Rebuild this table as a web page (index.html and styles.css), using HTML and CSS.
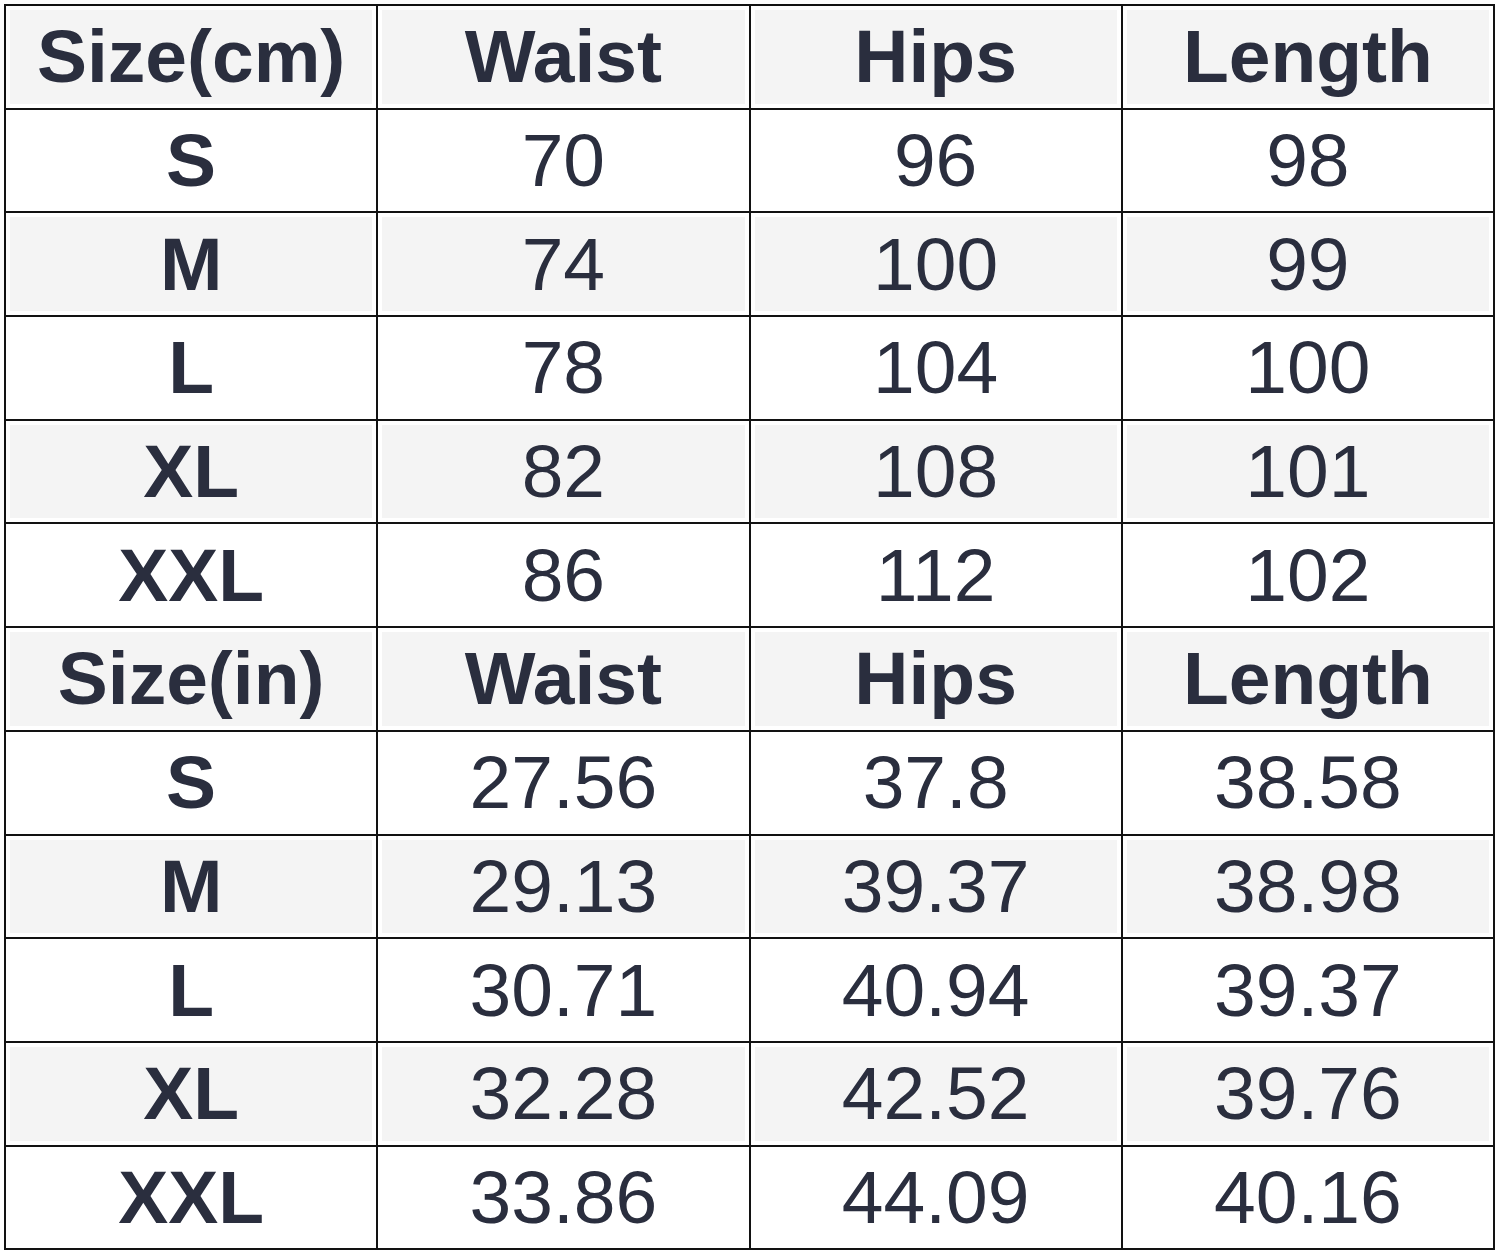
FILE: index.html
```html
<!DOCTYPE html>
<html>
<head>
<meta charset="utf-8">
<link rel="stylesheet" href="styles.css">
</head>
<body>
<table class="chart">
  <tr class="head"><th>Size(cm)</th><th>Waist</th><th>Hips</th><th>Length</th></tr>
  <tr><th>S</th><td>70</td><td>96</td><td>98</td></tr>
  <tr class="alt"><th>M</th><td>74</td><td>100</td><td>99</td></tr>
  <tr><th>L</th><td>78</td><td>104</td><td>100</td></tr>
  <tr class="alt"><th>XL</th><td>82</td><td>108</td><td>101</td></tr>
  <tr><th>XXL</th><td>86</td><td>112</td><td>102</td></tr>
  <tr class="head"><th>Size(in)</th><th>Waist</th><th>Hips</th><th>Length</th></tr>
  <tr><th>S</th><td>27.56</td><td>37.8</td><td>38.58</td></tr>
  <tr class="alt"><th>M</th><td>29.13</td><td>39.37</td><td>38.98</td></tr>
  <tr><th>L</th><td>30.71</td><td>40.94</td><td>39.37</td></tr>
  <tr class="alt"><th>XL</th><td>32.28</td><td>42.52</td><td>39.76</td></tr>
  <tr><th>XXL</th><td>33.86</td><td>44.09</td><td>40.16</td></tr>
</table>
</body>
</html>
```

FILE: styles.css
```css
html, body {
  margin: 0;
  padding: 0;
  background: #ffffff;
}
body {
  padding: 4px 0 0 4px;
  font-family: "Liberation Sans", Arial, sans-serif;
}
.chart {
  border-collapse: collapse;
  width: 1491px;
  table-layout: fixed;
  color: #2a2e3e;
}
.chart th,
.chart td {
  border: 2px solid #121212;
  height: 101.7px;
  padding: 0;
  text-align: center;
  vertical-align: middle;
  font-size: 75px;
  line-height: 1;
  white-space: nowrap;
}
.chart th {
  font-weight: bold;
}
.chart td {
  font-weight: normal;
}
.chart .head th,
.chart .alt th,
.chart .alt td {
  background: #f4f4f4;
  box-shadow: inset 0 0 0 4px #ffffff;
}
```
